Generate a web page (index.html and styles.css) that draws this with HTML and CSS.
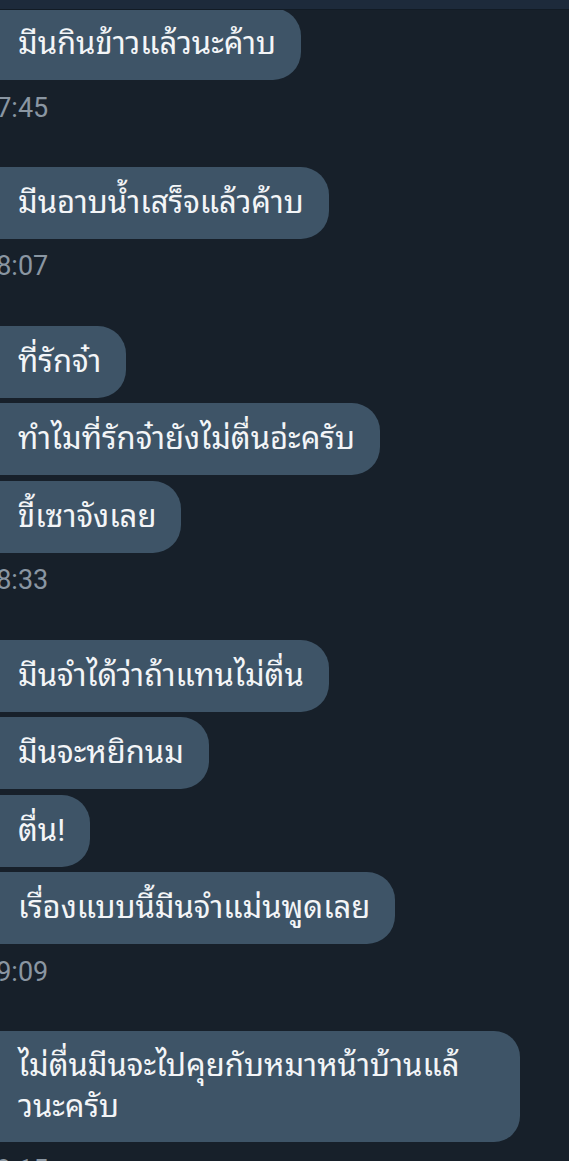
FILE: index.html
```html
<!DOCTYPE html>
<html lang="th">
<head>
<meta charset="utf-8">
<title>Chat</title>
<link rel="stylesheet" href="styles.css">
</head>
<body>
<div class="topbar"></div>
<main class="chat">
  <section class="group">
    <div class="bubble">มีนกินข้าวแล้วนะค้าบ</div>
    <div class="time">17:45</div>
  </section>
  <section class="group">
    <div class="bubble">มีนอาบน้ำเสร็จแล้วค้าบ</div>
    <div class="time">18:07</div>
  </section>
  <section class="group">
    <div class="bubble">ที่รักจ๋า</div>
    <div class="bubble">ทำไมที่รักจ๋ายังไม่ตื่นอ่ะครับ</div>
    <div class="bubble">ขี้เซาจังเลย</div>
    <div class="time">18:33</div>
  </section>
  <section class="group">
    <div class="bubble">มีนจำได้ว่าถ้าแทนไม่ตื่น</div>
    <div class="bubble">มีนจะหยิกนม</div>
    <div class="bubble">ตื่น!</div>
    <div class="bubble">เรื่องแบบนี้มีนจำแม่นพูดเลย</div>
    <div class="time">19:09</div>
  </section>
  <section class="group">
    <div class="bubble wide">ไม่ตื่นมีนจะไปคุยกับหมาหน้าบ้านแล้<br>วนะครับ</div>
    <div class="time">19:15</div>
  </section>
</main>
</body>
</html>
```
FILE: styles.css
```css
html, body {
  margin: 0;
  padding: 0;
}
body {
  background: #17202a;
  font-family: Roboto, "Noto Sans Thai Looped", "Noto Sans Thai UI", "Loma", "Garuda", "Waree", "Noto Sans Thai", "Noto Sans", sans-serif;
  width: 569px;
  height: 1161px;
  overflow: hidden;
}
.topbar {
  position: relative;
  z-index: 1;
  height: 9px;
  background: #1d2a3b;
  border-bottom: 1px solid #121b25;
}
.chat {
  margin-top: -2px;
  margin-left: -19px;
  display: flex;
  flex-direction: column;
}
.group {
  display: flex;
  flex-direction: column;
  align-items: flex-start;
  gap: 5.5px;
  margin-bottom: 44.4px;
}
.bubble {
  background: #3e5467;
  color: #f3f5f7;
  font-size: 31px;
  line-height: 42px;
  padding: 15px 25px 15px 37px;
  border-radius: 14px 28px 28px 14px;
  white-space: nowrap;
}
.bubble.wide {
  width: 476px;
  line-height: 41px;
  padding-top: 14px;
  padding-bottom: 15px;
  padding-right: 26px;
  border-radius: 18px 26px 26px 14px;
}
.time {
  margin-top: 7px;
  font-family: Roboto, sans-serif;
  font-size: 27px;
  line-height: 30px;
  color: #8a96a2;
}
```
